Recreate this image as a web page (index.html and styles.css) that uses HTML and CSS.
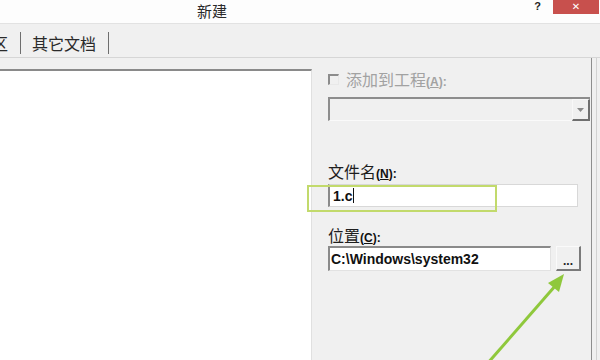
FILE: index.html
```html
<!DOCTYPE html>
<html lang="zh">
<head>
<meta charset="utf-8">
<title>新建</title>
<link rel="stylesheet" href="styles.css">
</head>
<body>
<div class="win">
  <div class="titlebar">
    <span class="title">新建</span>
    <span class="help">?</span>
    <span class="close">✕</span>
  </div>
  <div class="tabs">
    <span class="tab cut">区</span>
    <span class="sep"></span>
    <span class="tab">其它文档</span>
    <span class="sep"></span>
  </div>
  <div class="main">
    <div class="page">
      <div class="list"></div>
      <div class="side">
        <div class="chk"><span class="box"></span><span class="chk-text">添加到工程<span class="acc">(<u>A</u>):</span></span></div>
        <div class="combo"><span class="drop"><svg width="7" height="4" viewBox="0 0 7 4"><path d="M0 0H7L3.5 4Z" fill="#8a8a8a"/></svg></span></div>
        <div class="lbl first">文件名<span class="acc">(<u>N</u>):</span></div>
        <div class="field name">1.c<span class="caret"></span></div>
        <div class="lbl second">位置<span class="acc">(<u>C</u>):</span></div>
        <div class="row">
          <div class="field loc">C:\Windows\system32</div>
          <div class="browse">...</div>
        </div>
      </div>
    </div>
    <div class="rest"></div>
  </div>
  <div class="hl"></div>
  <svg class="arrow" width="600" height="360" viewBox="0 0 600 360">
    <line x1="487" y1="364" x2="556" y2="285" stroke="#8fc83c" stroke-width="3"/>
    <path d="M564 274 L548 283 L559 292 Z" fill="#8fc83c"/>
  </svg>
</div>
</body>
</html>
```
FILE: styles.css
```css
* { box-sizing: border-box; }
html, body { margin: 0; padding: 0; }
body {
  width: 600px;
  height: 360px;
  overflow: hidden;
  background: #f0f0f0;
  font-family: "Noto Sans CJK SC", "Noto Sans", sans-serif;
  color: #1e1e1e;
}
.win { position: relative; width: 600px; height: 360px; display: flex; flex-direction: column; }

.titlebar {
  height: 24px;
  background: #fdfdfd;
  border-bottom: 1px solid #e2e2e2;
  display: flex;
  align-items: flex-start;
}
.title { margin-left: 197px; font-size: 15px; line-height: 22px; color: #2a2a2a; }
.help {
  margin-left: auto;
  margin-right: 12px;
  font-family: "Liberation Sans", sans-serif;
  font-weight: bold;
  font-size: 11px;
  line-height: 13px;
  color: #222;
}
.close {
  width: 46px;
  height: 14px;
  margin-right: 1px;
  background: #c8504d;
  color: #fff;
  font-family: "DejaVu Sans", sans-serif;
  font-size: 10px;
  line-height: 14px;
  text-align: center;
}

.tabs {
  height: 34px;
  padding-top: 9px;
  border-bottom: 1px solid #d6d6d6;
  display: flex;
  align-items: flex-start;
}
.tab { font-size: 16px; line-height: 20px; height: 20px; color: #2a2a2a; }
.tab.cut { margin-left: -8px; }
.sep { width: 1px; height: 22px; margin-top: -1px; background: #6e6e6e; margin-left: 13px; margin-right: 11px; }
.tab + .sep { margin-left: 12px; }

.main { flex: 1; display: flex; }
.page {
  width: 592px;
  display: flex;
  border-right: 1px solid #8e8e8e;
}
.rest { flex: 1; margin-left: 4px; border-left: 1px solid #d2d2d2; }
.list {
  width: 312px;
  margin-top: 11px;
  background: #fff;
  border-top: 2px solid #8a8a8a;
  border-right: 1px solid #e0e0e0;
}
.side { flex: 1; padding-left: 16px; display: flex; flex-direction: column; }

.chk { margin-top: 13px; height: 17px; display: flex; align-items: center; color: #a2a2a2; font-size: 16px; }
.box {
  width: 11px; height: 11px;
  border-top: 2px solid #8c8c8c;
  border-left: 2px solid #8c8c8c;
  border-right: 1px solid #e8e8e8;
  border-bottom: 1px solid #e8e8e8;
  background: #f0f0f0;
  margin-right: 7px;
}
.chk-text { line-height: 17px; height: 17px; }
.acc { font-family: "Liberation Sans", sans-serif; font-weight: bold; font-size: 12px; line-height: 1; }
.chk .acc { color: #a2a2a2; }

.combo {
  margin-top: 9px;
  width: 262px;
  height: 24px;
  border-top: 2px solid #8d8d8d;
  border-left: 2px solid #8d8d8d;
  border-bottom: 1px solid #fafafa;
  background: #f0f0f0;
  display: flex;
  justify-content: flex-end;
}
.drop {
  width: 18px;
  height: 22px;
  border-right: 2px solid #6f6f6f;
  border-bottom: 2px solid #6f6f6f;
  border-top: 1px solid #f8f8f8;
  border-left: 1px solid #f8f8f8;
  display: flex;
  align-items: center;
  justify-content: center;
}

.lbl { font-size: 16px; line-height: 20px; height: 20px; color: #1e1e1e; }
.lbl .acc { color: #111; }
.lbl.first { margin-top: 40px; }
.lbl.second { margin-top: 18px; }

.field {
  background: #fff;
  font-family: "Liberation Sans", sans-serif;
  font-weight: bold;
  font-size: 14px;
  color: #111;
  display: flex;
  align-items: center;
}
.name {
  margin-top: 3px;
  width: 250px;
  height: 23px;
  border: 1px solid #d8d8d8;
  border-left: 2px solid #8a8a8a;
  padding-left: 3px;
}
.caret { width: 1px; height: 15px; background: #111; margin-left: 1px; }
.row { margin-top: 1px; display: flex; align-items: flex-start; }
.loc {
  width: 223px;
  height: 25px;
  border-top: 2px solid #8a8a8a;
  border-left: 2px solid #8a8a8a;
  border-right: 1px solid #e2e2e2;
  border-bottom: 1px solid #e2e2e2;
  padding-left: 1px;
}
.browse {
  margin-left: 5px;
  width: 25px;
  height: 25px;
  background: #f0f0f0;
  border-top: 1px solid #fafafa;
  border-left: 1px solid #fafafa;
  border-right: 2px solid #7a7a7a;
  border-bottom: 2px solid #7a7a7a;
  font-family: "Liberation Sans", sans-serif;
  font-weight: bold;
  font-size: 12px;
  line-height: 28px;
  text-align: center;
  color: #222;
}

.hl {
  position: absolute;
  left: 307px;
  top: 185px;
  width: 190px;
  height: 27px;
  border: 2px solid #c2da6c;
}
.arrow { position: absolute; left: 0; top: 0; pointer-events: none; }
```
